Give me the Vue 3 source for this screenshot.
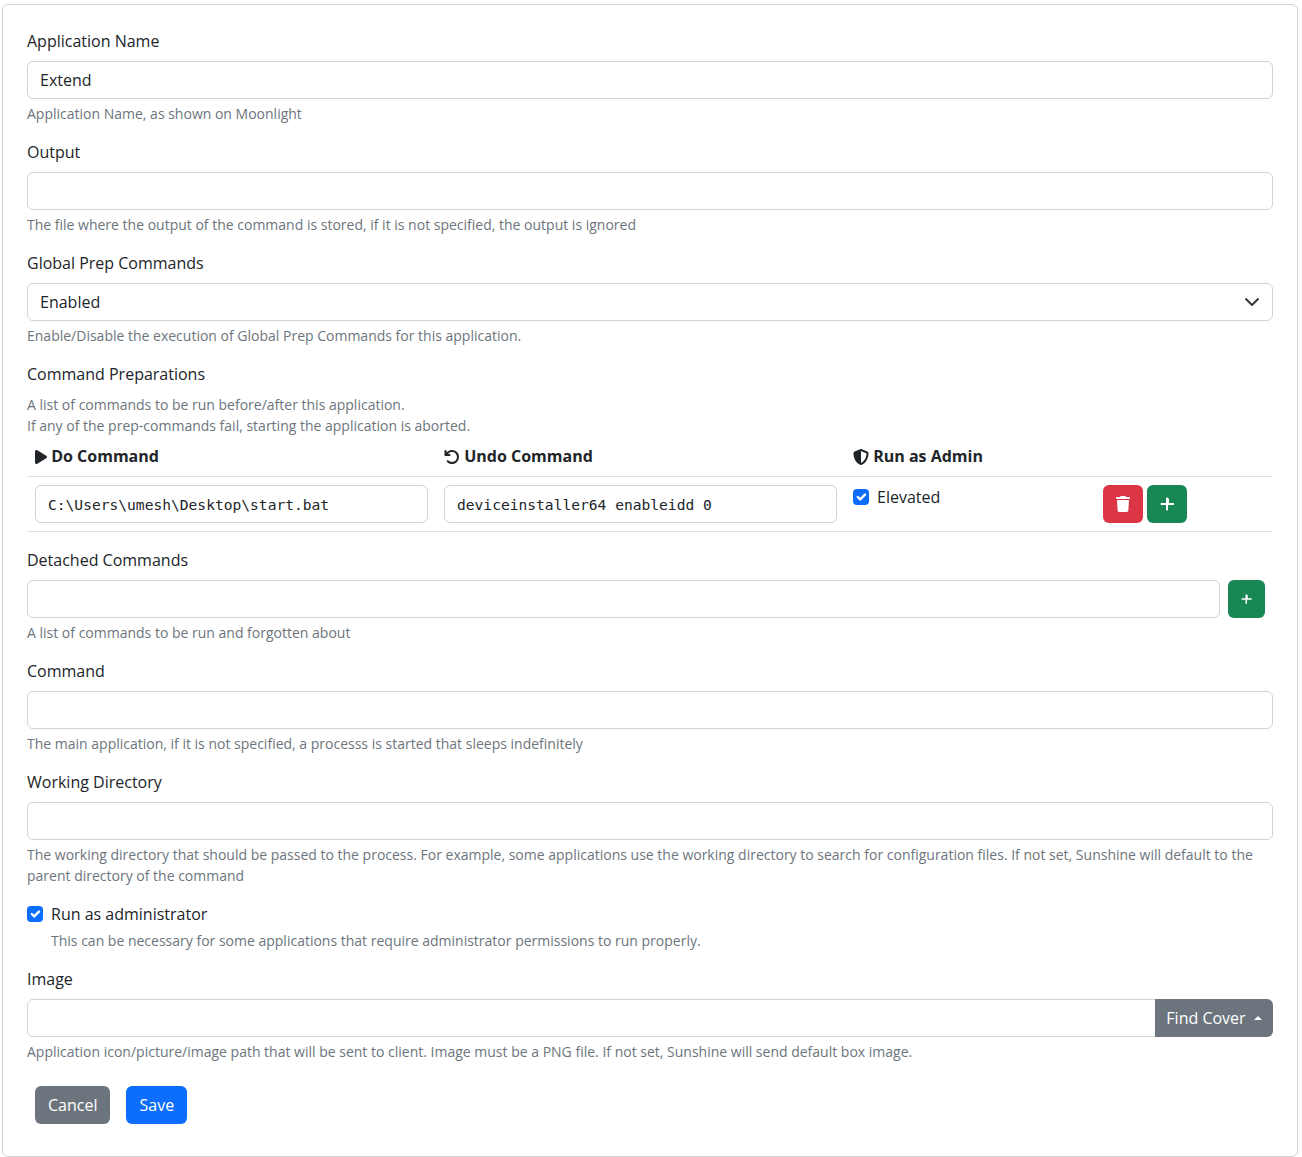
<script setup>
const play = "M73 39c-14.8-9.1-33.4-9.4-48.5-.9S0 62.6 0 80V432c0 17.4 9.4 33.4 24.5 41.9s33.7 8.1 48.5-.9L361 297c14.3-8.7 23-24.2 23-41s-8.7-32.2-23-41L73 39z";
const undo = "M125.7 160H176c17.7 0 32 14.3 32 32s-14.3 32-32 32H48c-17.7 0-32-14.3-32-32V64c0-17.7 14.3-32 32-32s32 14.3 32 32v51.2L97.6 97.6c87.5-87.5 229.3-87.5 316.8 0s87.5 229.3 0 316.8s-229.3 87.5-316.8 0c-12.5-12.5-12.5-32.8 0-45.3s32.8-12.5 45.3 0c62.5 62.5 163.8 62.5 226.3 0s62.5-163.8 0-226.3s-163.8-62.5-226.3 0L125.7 160z";
const shield = "M256 0c4.6 0 9.2 1 13.4 2.9L457.7 82.8c22 9.3 38.4 31 38.3 57.2c-.5 99.2-41.3 280.7-213.6 363.2c-16.7 8-36.1 8-52.8 0C57.3 420.7 16.5 239.2 16 140c-.1-26.2 16.3-47.9 38.3-57.2L242.7 2.9C246.8 1 251.4 0 256 0zm0 66.8V444.8C394 378 431.1 230.1 432 141.4L256 66.8l0 0z";
const trash = "M135.2 17.7L128 32H32C14.3 32 0 46.3 0 64S14.3 96 32 96H416c17.7 0 32-14.3 32-32s-14.3-32-32-32H320l-7.2-14.3C307.4 6.8 296.3 0 284.2 0H163.8c-12.1 0-23.2 6.8-28.6 17.7zM416 128H32L53.2 467c1.6 25.3 22.6 45 47.9 45H346.9c25.3 0 46.3-19.7 47.9-45L416 128z";
const plus = "M256 80c0-17.7-14.3-32-32-32s-32 14.3-32 32V224H48c-17.7 0-32 14.3-32 32s14.3 32 32 32H192V432c0 17.7 14.3 32 32 32s32-14.3 32-32V288H432c17.7 0 32-14.3 32-32s-14.3-32-32-32H288V80z";
</script>

<template>
  <div class="page">
    <form class="card" @submit.prevent>
      <div class="field">
        <label class="label">Application Name</label>
        <input class="control" value="Extend" />
        <div class="help">Application Name, as shown on Moonlight</div>
      </div>
      <div class="field">
        <label class="label">Output</label>
        <input class="control" />
        <div class="help">The file where the output of the command is stored, if it is not specified, the output is ignored</div>
      </div>
      <div class="field">
        <label class="label">Global Prep Commands</label>
        <div class="select-wrap">
          <select class="control select"><option>Enabled</option><option>Disabled</option></select>
          <svg class="chevron" viewBox="0 0 16 16"><path fill="none" stroke="#343a40" stroke-linecap="round" stroke-linejoin="round" stroke-width="2" d="m2 5 6 6 6-6" /></svg>
        </div>
        <div class="help">Enable/Disable the execution of Global Prep Commands for this application.</div>
      </div>
      <div>
        <label class="label">Command Preparations</label>
        <div class="help">A list of commands to be run before/after this application.<br />If any of the prep-commands fail, starting the application is aborted.</div>
        <table class="table">
          <colgroup><col class="c1" /><col class="c1" /><col class="c3" /><col /></colgroup>
          <thead>
            <tr>
              <th><svg class="ic-play" viewBox="0 0 384 512"><path :d="play" /></svg> Do Command</th>
              <th><svg class="ic" viewBox="0 0 512 512"><path :d="undo" /></svg> Undo Command</th>
              <th><svg class="ic" viewBox="0 0 512 512"><path :d="shield" /></svg> Run as Admin</th>
              <th></th>
            </tr>
          </thead>
          <tbody>
            <tr>
              <td><input class="control mono" value="C:\Users\umesh\Desktop\start.bat" /></td>
              <td><input class="control mono" value="deviceinstaller64 enableidd 0" /></td>
              <td>
                <div class="check">
                  <span class="box"><svg viewBox="0 0 20 20"><path fill="none" stroke="#fff" stroke-linecap="round" stroke-linejoin="round" stroke-width="3" d="m6 10 3 3 6-6" /></svg></span>
                  <span>Elevated</span>
                </div>
              </td>
              <td>
                <div class="actions">
                  <button type="button" class="btn red"><svg class="ic-btn" viewBox="0 0 448 512"><path :d="trash" /></svg></button>
                  <button type="button" class="btn green"><svg class="ic-btn" viewBox="0 0 448 512"><path :d="plus" /></svg></button>
                </div>
              </td>
            </tr>
          </tbody>
        </table>
      </div>
      <div class="field">
        <label class="label">Detached Commands</label>
        <div class="detached">
          <input class="control" />
          <button type="button" class="btn green small"><svg class="ic-small" viewBox="0 0 448 512"><path :d="plus" /></svg></button>
        </div>
        <div class="help">A list of commands to be run and forgotten about</div>
      </div>
      <div class="field">
        <label class="label">Command</label>
        <input class="control" />
        <div class="help">The main application, if it is not specified, a processs is started that sleeps indefinitely</div>
      </div>
      <div class="field">
        <label class="label">Working Directory</label>
        <input class="control" />
        <div class="help">The working directory that should be passed to the process. For example, some applications use the working directory to search for configuration files. If not set, Sunshine will default to the parent directory of the command</div>
      </div>
      <div class="field">
        <div class="check">
          <span class="box"><svg viewBox="0 0 20 20"><path fill="none" stroke="#fff" stroke-linecap="round" stroke-linejoin="round" stroke-width="3" d="m6 10 3 3 6-6" /></svg></span>
          <span>Run as administrator</span>
        </div>
        <div class="help indent">This can be necessary for some applications that require administrator permissions to run properly.</div>
      </div>
      <div class="field">
        <label class="label">Image</label>
        <div class="group">
          <input class="control" />
          <button type="button" class="btn gray find">Find Cover<span class="caret"></span></button>
        </div>
        <div class="help">Application icon/picture/image path that will be sent to client. Image must be a PNG file. If not set, Sunshine will send default box image.</div>
      </div>
      <div class="footer">
        <button type="button" class="btn gray">Cancel</button>
        <button type="button" class="btn blue">Save</button>
      </div>
    </form>
  </div>
</template>

<style>
html, body { overflow: hidden; background: #fff; }
</style>

<style scoped>
* { box-sizing: border-box; }
.page {
  padding: 4px 0 0 2px;
  width: 1298px;
  font-family: "Open Sans", sans-serif;
  font-size: 16px;
  line-height: 24px;
  color: #212529;
}
.card {
  border: 1px solid rgba(0, 0, 0, 0.176);
  border-radius: 6px;
  padding: 24px;
}
.field { margin-bottom: 16px; }
.label { display: block; margin-bottom: 8px; }
.help { margin-top: 4px; font-size: 14px; line-height: 21px; color: #6c757d; }
.indent { padding-left: 24px; }
.control {
  display: block;
  width: 100%;
  height: 38px;
  padding: 6px 12px;
  font: inherit;
  color: #212529;
  background: #fff;
  border: 1px solid #ced4da;
  border-radius: 6px;
  outline: none;
}
.mono { font-family: "DejaVu Sans Mono", monospace; font-size: 14.6px; }
.select-wrap { position: relative; }
.select { appearance: none; }
.chevron { position: absolute; right: 13px; top: 11px; width: 16px; height: 16px; pointer-events: none; }
.table {
  width: 100%;
  margin-bottom: 16px;
  border-collapse: collapse;
  table-layout: fixed;
}
.c1 { width: 409px; }
.c3 { width: 250px; }
.table th {
  padding: 8px;
  text-align: left;
  font-weight: 700;
  border-bottom: 1px solid #dee2e6;
}
.table td {
  padding: 8px;
  vertical-align: top;
  border-bottom: 1px solid #dee2e6;
}
.ic, .ic-play { display: inline-block; height: 16px; vertical-align: -3px; fill: #212529; }
.ic { width: 16px; }
.ic-play { width: 12px; }
.check { display: flex; gap: 8px; min-height: 24px; }
.box {
  flex: none;
  width: 16px;
  height: 16px;
  margin-top: 4px;
  background: #0d6efd;
  border-radius: 4px;
}
.box svg { display: block; width: 16px; height: 16px; }
.actions { display: flex; gap: 4px; }
.btn {
  display: inline-flex;
  align-items: center;
  justify-content: center;
  height: 38px;
  padding: 6px 12px;
  font: inherit;
  color: #fff;
  border: 1px solid transparent;
  border-radius: 6px;
}
.red { background: #dc3545; }
.green { background: #198754; }
.gray { background: #6c757d; }
.blue { background: #0d6efd; }
.ic-btn { width: 14px; height: 16px; fill: #fff; }
.ic-small { width: 10.5px; height: 12px; fill: #fff; }
.detached { display: flex; gap: 8px; padding-right: 8px; }
.detached .control { flex: 1; }
.small { flex: none; width: 37px; }
.group { display: flex; }
.group .control { flex: 1; border-radius: 6px 0 0 6px; }
.find { flex: none; width: 118px; border-radius: 0 6px 6px 0; margin-left: -1px; white-space: nowrap; }
.caret {
  margin-left: 8px;
  border-left: 4.8px solid transparent;
  border-right: 4.8px solid transparent;
  border-bottom: 4.8px solid #fff;
}
.footer { display: flex; gap: 16px; padding: 8px; }
</style>
